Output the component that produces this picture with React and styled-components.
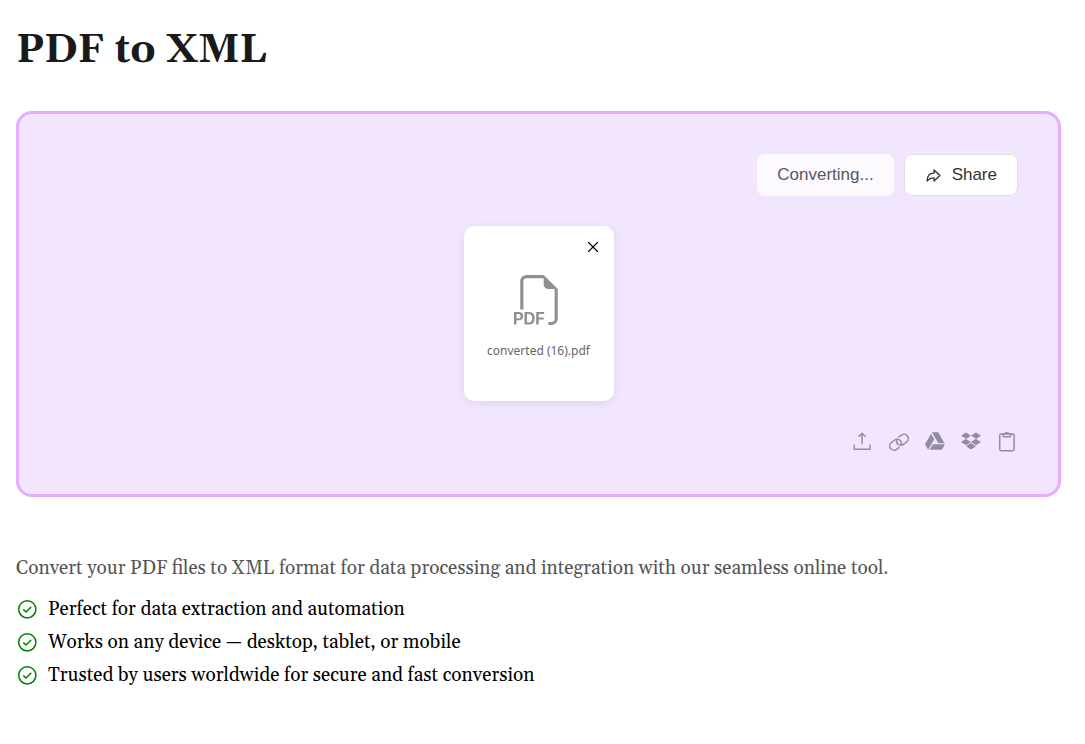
import React from "react";
import styled, { createGlobalStyle } from "styled-components";
import { IoArrowRedoOutline } from "react-icons/io5";
import { FaGoogleDrive, FaDropbox } from "react-icons/fa";
import { BsFiletypePdf } from "react-icons/bs";

const GlobalStyle = createGlobalStyle`
  *, *::before, *::after { box-sizing: border-box; }
  body {
    margin: 0;
    background: #fff;
    color: #000;
    font-family: Georgia, Gelasio, "Liberation Serif", serif;
  }
`;

const Page = styled.main`
  padding: 19px 24px 56px 16px;
`;

const Title = styled.h1`
  margin: 0 0 28px;
  font-size: 40px;
  line-height: 64px;
  font-weight: 700;
  color: #1a1a1a;
`;

const DropZone = styled.section`
  display: flex;
  flex-direction: column;
  padding: 40px;
  border: 3px solid #e6acff;
  border-radius: 16px;
  background: #f2e6ff;
`;

const Actions = styled.div`
  display: flex;
  justify-content: flex-end;
  gap: 10px;
  margin-bottom: 30px;
`;

const ActionButton = styled.button`
  display: flex;
  align-items: center;
  gap: 10px;
  height: 42px;
  padding: 0 20px;
  border: ${(p) => (p.disabled ? "0" : "1px solid #e0e0e0")};
  border-radius: 8px;
  background: #fff;
  color: #333;
  font-family: "Liberation Sans", Arial, sans-serif;
  font-size: 17px;
  opacity: ${(p) => (p.disabled ? 0.8 : 1)};

  svg path {
    stroke-width: 42px;
  }
`;

const FileCard = styled.article`
  display: flex;
  flex-direction: column;
  align-items: center;
  align-self: center;
  width: 150px;
  height: 175px;
  padding: 12px;
  border-radius: 10px;
  background: #fff;
  box-shadow: 0 2px 10px rgba(0, 0, 0, 0.08);
`;

const IconButton = styled.button`
  display: flex;
  align-items: center;
  justify-content: center;
  width: ${(p) => p.$size}px;
  height: ${(p) => p.$size}px;
  padding: 0;
  border: 0;
  background: none;
  color: ${(p) => p.$color};
`;

const CloseButton = styled(IconButton)`
  align-self: flex-end;
  margin-bottom: 19px;
`;

const FileName = styled.span`
  margin-top: 17px;
  font-family: "Noto Sans", sans-serif;
  font-size: 12px;
  line-height: 18px;
  color: #666;
  white-space: nowrap;
`;

const Sources = styled.div`
  display: flex;
  justify-content: flex-end;
  gap: 12px;
  margin-top: 29px;
`;

const BrandIcon = styled.span`
  display: flex;
  padding: 0 0 2px 2px;
`;

const Description = styled.p`
  margin: 56px 0 10px;
  font-size: 19px;
  line-height: 30px;
  color: #555;
`;

const Features = styled.ul`
  margin: 0;
  padding: 0;
  list-style: none;
`;

const Feature = styled.li`
  display: flex;
  align-items: center;
  gap: 10px;
  font-size: 19px;
  line-height: 33px;

  svg {
    color: #008000;
    flex: none;
  }
`;

const LineIcon = ({ size = 24, children, strokeWidth = 1.5 }) => (
  <svg
    width={size}
    height={size}
    viewBox={`0 0 ${size} ${size}`}
    fill="none"
    stroke="currentColor"
    strokeWidth={strokeWidth}
    strokeLinecap="round"
    strokeLinejoin="round"
    aria-hidden="true"
  >
    {children}
  </svg>
);

const UploadIcon = () => (
  <LineIcon>
    <path d="M4.2 15v4.2h15.8V15M12.1 13.5V3.3M9 6.3l3.1-3.1 3.1 3.1" />
  </LineIcon>
);

const LinkIcon = () => (
  <LineIcon strokeWidth={1.5}>
    <g transform="translate(13 12.2) rotate(-36)">
      <path d="M-3 4.3H-6.2a4.3 4.3 0 0 1 0-8.6H-2.2a4.3 4.3 0 0 1 3 7.3" />
      <path d="M3-4.3H6.2a4.3 4.3 0 0 1 0 8.6H2.2a4.3 4.3 0 0 1-3-7.3" />
    </g>
  </LineIcon>
);

const ClipboardIcon = () => (
  <LineIcon>
    <rect x="5.7" y="4" width="14.4" height="16.7" rx="1.4" />
    <path d="M9.2 4.1v1.6c0 .7.4 1.1 1.1 1.1h5.2c.7 0 1.1-.4 1.1-1.1V4.1M9.2 4.1h1.5c.3-1 1.1-1.4 2.2-1.4s1.9.4 2.2 1.4h1.5" />
  </LineIcon>
);

const DriveIcon = () => (
  <BrandIcon>
    <FaGoogleDrive size={20} />
  </BrandIcon>
);

const DropboxIcon = () => (
  <BrandIcon>
    <FaDropbox size={20} />
  </BrandIcon>
);

const CloseIcon = () => (
  <LineIcon size={18} strokeWidth={1.1}>
    <path d="M4.5 4.5l9 9M13.5 4.5l-9 9" />
  </LineIcon>
);

const CheckIcon = () => (
  <LineIcon size={22} strokeWidth={1.5}>
    <circle cx="11.3" cy="10.3" r="8.6" />
    <path d="M7.7 10.9l2.4 2.1 4.7-4.7" />
  </LineIcon>
);

const sources = [
  { label: "Upload from device", Icon: UploadIcon },
  { label: "Add from link", Icon: LinkIcon },
  { label: "Google Drive", Icon: DriveIcon },
  { label: "Dropbox", Icon: DropboxIcon },
  { label: "Paste from clipboard", Icon: ClipboardIcon },
];

const features = [
  "Perfect for data extraction and automation",
  "Works on any device — desktop, tablet, or mobile",
  "Trusted by users worldwide for secure and fast conversion",
];

export default function App() {
  return (
    <Page>
      <GlobalStyle />
      <Title>PDF to XML</Title>
      <DropZone>
        <Actions>
          <ActionButton disabled>Converting...</ActionButton>
          <ActionButton>
            <IoArrowRedoOutline size={17} />
            Share
          </ActionButton>
        </Actions>
        <FileCard>
          <CloseButton aria-label="Remove file" $color="#000" $size={18}>
            <CloseIcon />
          </CloseButton>
          <BsFiletypePdf size={50} color="#909090" />
          <FileName>converted (16).pdf</FileName>
        </FileCard>
        <Sources>
          {sources.map(({ label, Icon }) => (
            <IconButton key={label} aria-label={label} $color="#958b9f" $size={24}>
              <Icon />
            </IconButton>
          ))}
        </Sources>
      </DropZone>
      <Description>
        Convert your PDF files to XML format for data processing and integration with our seamless online tool.
      </Description>
      <Features>
        {features.map((text) => (
          <Feature key={text}>
            <CheckIcon />
            {text}
          </Feature>
        ))}
      </Features>
    </Page>
  );
}
